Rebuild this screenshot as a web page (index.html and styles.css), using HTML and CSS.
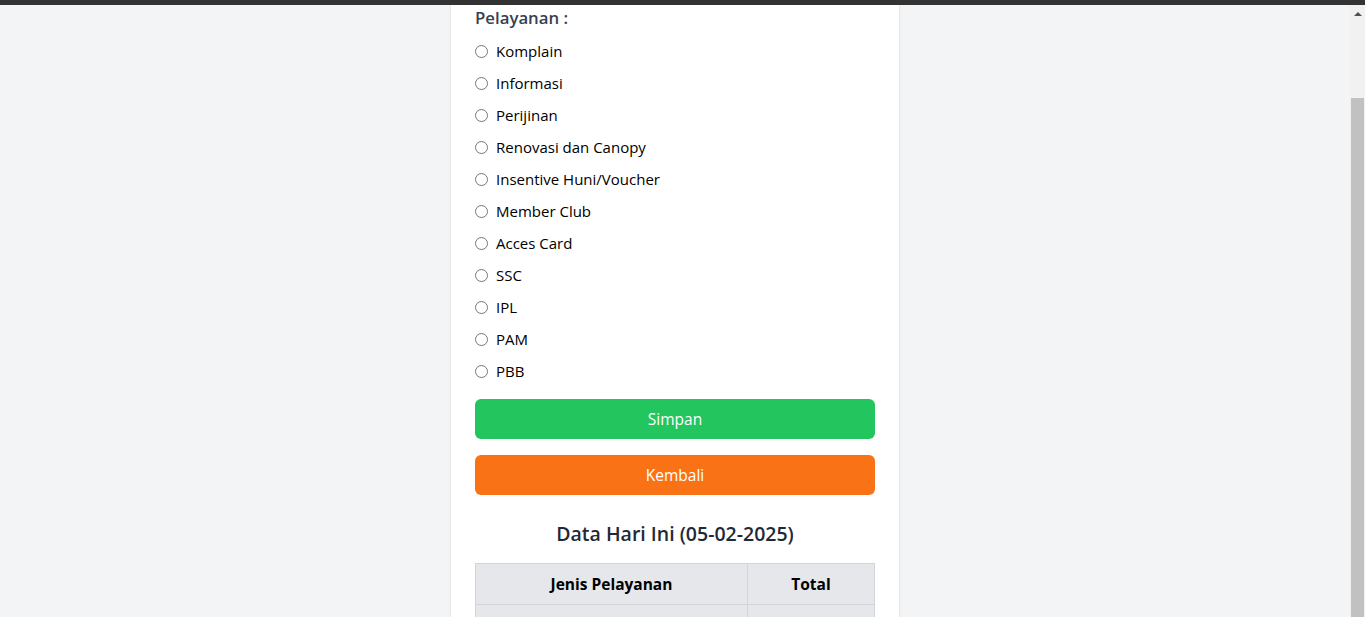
FILE: index.html
```html
<!DOCTYPE html>
<html lang="id">
<head>
<meta charset="utf-8">
<title>Pelayanan</title>
<link rel="stylesheet" href="styles.css">
</head>
<body>
<div class="topbar"></div>
<div class="viewport">
  <main class="page">
    <section class="card">
      <form class="form">
        <div class="label">Pelayanan :</div>
        <label class="opt"><input type="radio" name="p"><span>Komplain</span></label>
        <label class="opt"><input type="radio" name="p"><span>Informasi</span></label>
        <label class="opt"><input type="radio" name="p"><span>Perijinan</span></label>
        <label class="opt"><input type="radio" name="p"><span>Renovasi dan Canopy</span></label>
        <label class="opt"><input type="radio" name="p"><span>Insentive Huni/Voucher</span></label>
        <label class="opt"><input type="radio" name="p"><span>Member Club</span></label>
        <label class="opt"><input type="radio" name="p"><span>Acces Card</span></label>
        <label class="opt"><input type="radio" name="p"><span>SSC</span></label>
        <label class="opt"><input type="radio" name="p"><span>IPL</span></label>
        <label class="opt"><input type="radio" name="p"><span>PAM</span></label>
        <label class="opt"><input type="radio" name="p"><span>PBB</span></label>
        <button type="button" class="btn btn-green">Simpan</button>
        <button type="button" class="btn btn-orange">Kembali</button>
      </form>
      <h2 class="title">Data Hari Ini (05-02-2025)</h2>
      <table class="tbl">
        <thead>
          <tr><th class="c1">Jenis Pelayanan</th><th class="c2">Total</th></tr>
        </thead>
        <tbody>
          <tr><td>&nbsp;</td><td>&nbsp;</td></tr>
        </tbody>
      </table>
    </section>
  </main>
  <div class="scrollbar">
    <div class="arrow"></div>
    <div class="thumb"></div>
  </div>
</div>
</body>
</html>
```

FILE: styles.css
```css
* { box-sizing: border-box; }
html, body { margin: 0; padding: 0; height: 617px; overflow: hidden; }
body {
  font-family: "Open Sans", "Noto Sans", sans-serif;
  background: #f3f4f6;
  color: #000;
  display: flex;
  flex-direction: column;
}
.topbar { height: 5px; background: #333333; flex: none; }
.viewport { flex: 1; display: flex; min-height: 0; }
.page {
  flex: 1;
  display: flex;
  justify-content: center;
  overflow: hidden;
  background: #f3f4f6;
}
.card {
  width: 448px;
  background: #fff;
  padding: 0 24px 24px;
  box-shadow: 0 1px 3px rgba(0,0,0,0.08), 0 1px 2px rgba(0,0,0,0.05);
  align-self: flex-start;
}
.form { display: flex; flex-direction: column; }
.label {
  font-size: 16.8px;
  font-weight: 600;
  color: #374151;
  line-height: 26px;
  margin-bottom: 8px;
}
.opt {
  display: flex;
  align-items: center;
  height: 24px;
  margin-bottom: 8px;
  font-size: 15px;
  color: #000;
}
.opt input {
  margin: 0 8px 0 0;
  width: 13px;
  height: 13px;
}
.btn {
  height: 40px;
  border: 0;
  border-radius: 6px;
  color: #fff;
  font-family: inherit;
  font-size: 15.5px;
  width: 100%;
}
.btn-green { background: #22c55e; margin-top: 8px; }
.btn-orange { background: #f97316; margin-top: 16px; }
.title {
  margin: 25px 0 15px;
  text-align: center;
  font-size: 19.5px;
  font-weight: 600;
  line-height: 28px;
  color: #1f2937;
}
.tbl {
  width: 100%;
  border-collapse: collapse;
}
.tbl th, .tbl td {
  border: 1px solid #d1d5db;
  background: #e5e7eb;
  height: 41px;
  font-size: 15.5px;
  text-align: center;
}
.tbl th { font-weight: 700; color: #000; }
.tbl .c1 { width: 272px; }
.scrollbar {
  width: 15px;
  flex: none;
  background: #f1f1f1;
  display: flex;
  flex-direction: column;
  align-items: center;
}
.arrow {
  margin-top: 7px;
  width: 0; height: 0;
  border-left: 4px solid transparent;
  border-right: 4px solid transparent;
  border-bottom: 4px solid #505050;
}
.thumb {
  margin-top: 82px;
  width: 13px;
  flex: 1;
  background: #c1c1c1;
}
```
